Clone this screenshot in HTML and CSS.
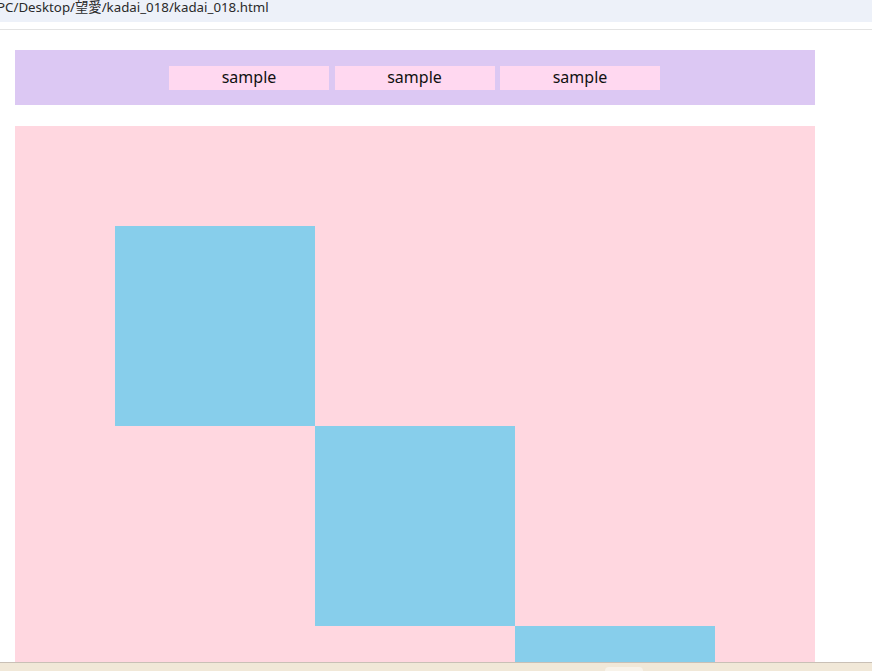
FILE: index.html
```html
<!DOCTYPE html>
<html lang="ja">
<head>
<meta charset="utf-8">
<title>kadai_018</title>
<link rel="stylesheet" href="styles.css">
</head>
<body>
  <div class="chrome">
    <div class="addr">PC/Desktop/望愛/kadai_018/kadai_018.html</div>
  </div>
  <div class="page">
    <header class="nav">
      <div class="nav-item">sample</div>
      <div class="nav-item">sample</div>
      <div class="nav-item">sample</div>
    </header>
    <main class="stage">
      <div class="box box-1"></div>
      <div class="box box-2"></div>
      <div class="box box-3"></div>
    </main>
  </div>
  <div class="taskbar"><span class="tab"></span></div>
</body>
</html>
```
FILE: styles.css
```css
html, body {
  margin: 0;
  padding: 0;
  height: 671px;
  overflow: hidden;
  background: #ffffff;
}
body {
  display: flex;
  flex-direction: column;
  font-family: "Noto Sans", "Noto Sans CJK JP", sans-serif;
}
.chrome {
  height: 30px;
  flex: none;
  border-bottom: 1px solid #e3e3e3;
  box-sizing: border-box;
}
.addr {
  height: 22px;
  background: #edf1f9;
  font-family: "Noto Sans", "Noto Sans CJK JP", sans-serif;
  font-size: 13.3px;
  line-height: 15px;
  color: #2a2a2a;
  text-indent: -3px;
  white-space: nowrap;
  overflow: hidden;
}
.page {
  flex: 1;
  overflow: hidden;
  padding: 20px 15px 0;
}
.nav {
  width: 800px;
  height: 55px;
  background: #dcc8f3;
  display: flex;
  justify-content: flex-start;
  align-items: flex-start;
  gap: 5.5px;
  padding: 16px 0 0 154px;
  box-sizing: border-box;
}
.nav-item {
  width: 160px;
  height: 24px;
  background: #ffd8f0;
  text-align: center;
  font-size: 16px;
  line-height: 23px;
  color: #111;
}
.stage {
  margin-top: 21px;
  width: 800px;
  height: 700px;
  background: #ffd7e0;
  padding-top: 100px;
  box-sizing: border-box;
}
.box {
  width: 200px;
  height: 200px;
  background: #87ceeb;
}
.box-1 { margin-left: 100px; }
.box-2 { margin-left: 300px; }
.box-3 { margin-left: 500px; }
.taskbar {
  flex: none;
  height: 8px;
  border-top: 1px solid #c9c0b6;
  background: #f1e8d8;
  position: relative;
}
.tab {
  position: absolute;
  left: 605px;
  top: 4px;
  width: 38px;
  height: 6px;
  border-radius: 4px 4px 0 0;
  background: #f8f3ea;
}
```
